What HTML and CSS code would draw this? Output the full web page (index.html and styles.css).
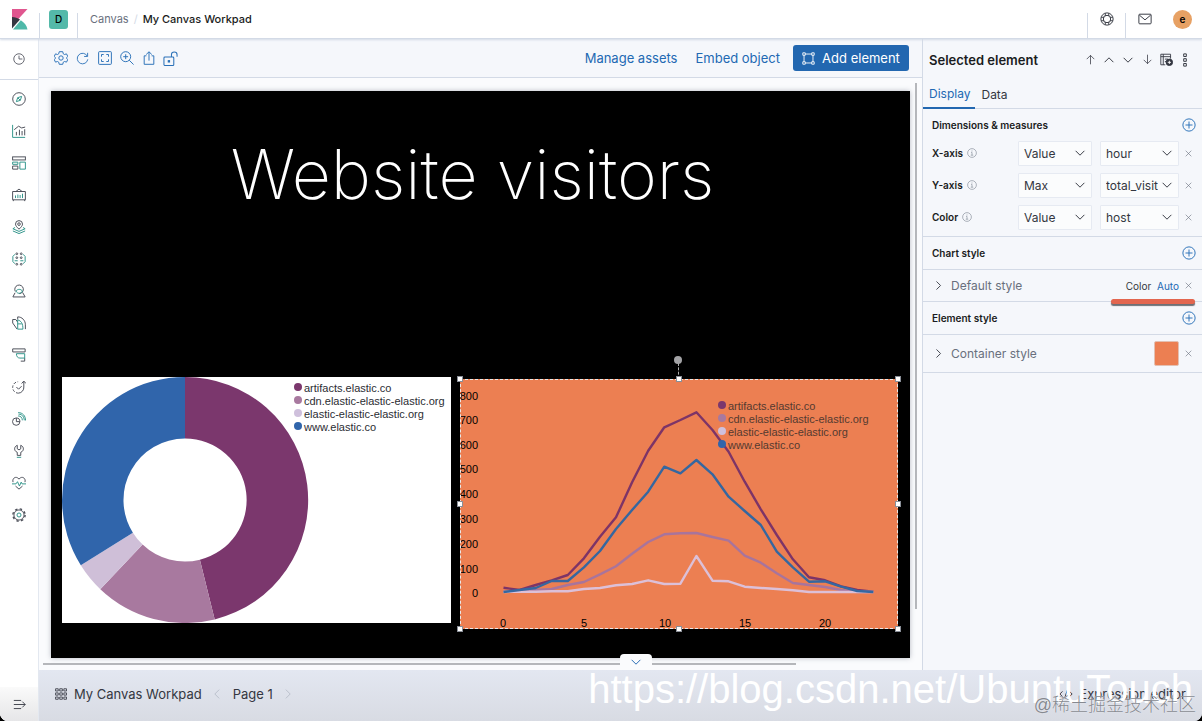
FILE: index.html
```html
<!DOCTYPE html>
<html lang="en">
<head>
<meta charset="utf-8">
<title>My Canvas Workpad - Canvas</title>
<link rel="stylesheet" href="styles.css">
</head>
<body>
<svg class="sprite" aria-hidden="true">
  <symbol id="down" viewBox="0 0 16 16"><path d="M3 5.500l5 5 5-5"/></symbol>
  <symbol id="up" viewBox="0 0 16 16"><path d="M3 10.500l5-5 5 5"/></symbol>
  <symbol id="left" viewBox="0 0 16 16"><path d="M10.500 3l-5 5 5 5"/></symbol>
  <symbol id="right" viewBox="0 0 16 16"><path d="M5.500 3l5 5-5 5"/></symbol>
  <symbol id="cross" viewBox="0 0 16 16"><path d="M3 3l10 10M13 3L3 13"/></symbol>
  <symbol id="info" viewBox="0 0 16 16"><circle cx="8" cy="8" r="7"/><path d="M6.500 7H8v4.500M6 11.500h4M8 4v1.500"/></symbol>
  <symbol id="plus" viewBox="0 0 16 16"><circle cx="8" cy="8" r="7"/><path d="M8 4v8M4 8h8"/></symbol>
</svg>
<div class="app">
  <header class="header">
    <a class="logo" href="#" aria-label="Kibana home">
      <svg width="16" height="21" viewBox="0 0 16 21"><path fill="#e0568f" d="M0 0h15.500L0 17z"/><path fill="#343741" d="M0 8c3 0 5.500 1 8 2.600L0 19.500z"/><path fill="#4fb9a9" d="M8.800 11.200c3.700 2.300 6 5.600 6.700 9.300H1z"/></svg>
    </a>
    <div class="space"><button class="badge" type="button">D</button></div>
    <nav class="crumbs" aria-label="Breadcrumb"><a href="#">Canvas</a><span class="slash">/</span><strong>My Canvas Workpad</strong></nav>
    <div class="header-end">
      <button class="cell" type="button" aria-label="Help"><svg class="ic" width="14" height="14" viewBox="0 0 16 16"><circle cx="8" cy="8" r="7"/><circle cx="8" cy="8" r="4.200"/><path d="M6 1.500v3M10 1.500v3M6 11.500v3M10 11.500v3M1.500 6h3M1.500 10h3M11.500 6h3M11.500 10h3"/></svg></button>
      <button class="cell" type="button" aria-label="Newsfeed"><svg class="ic" width="14" height="14" viewBox="0 0 16 16"><rect x="1" y="2.500" width="14" height="11" rx="1"/><path d="M1.500 3.500L8 9l6.500-5.500"/></svg></button>
      <button class="avatar" type="button">e</button>
    </div>
  </header>

  <nav class="side" aria-label="Main">
    <a class="recent" href="#" aria-label="Recently viewed"><svg class="ic" width="12" height="12" viewBox="0 0 16 16"><circle cx="8" cy="8" r="7"/><path d="M8 3.500V8h4.500"/></svg></a>
    <div class="links">
      <a href="#" aria-label="Discover"><svg class="ic" width="14" height="14" viewBox="0 0 16 16"><circle cx="8" cy="8" r="7.200"/><path class="t" d="M11 5L9.500 9.500 5 11l1.500-4.500zM6.500 6.500l3 3"/></svg></a>
      <a href="#" aria-label="Visualize"><svg class="ic" width="14" height="14" viewBox="0 0 16 16"><path class="t" d="M.7 1v14.300H15"/><path d="M5 13V9M8.500 13V6.500M11.500 13V8M14.500 13V6M2.500 6.500L7.500 2.500l3.500 2 4-1"/></svg></a>
      <a href="#" aria-label="Dashboard"><svg class="ic" width="14" height="14" viewBox="0 0 16 16"><rect x=".7" y="1" width="14.600" height="3.500"/><path d="M.7 11.500h6V15h-6z"/><path class="t" d="M.7 7h6v2.500h-6zM9 7h6.300v8H9z"/></svg></a>
      <a href="#" aria-label="Canvas"><svg class="ic" width="14" height="14" viewBox="0 0 16 16"><path d="M.7 4h14.600v9.500H.7zM4.500 4L8 1.200 11.500 4M1.500 15v-1.500M14.500 15v-1.500"/><path class="t" d="M4 11.500v-3M6.700 11.500V7.500M9.300 11.500V8M12 11.500V6.500"/></svg></a>
      <a href="#" aria-label="Maps"><svg class="ic" width="14" height="14" viewBox="0 0 16 16"><path d="M8 10.500C5.500 8 4 6.500 4 4.700a4 4 0 018 0C12 6.500 10.500 8 8 10.500z"/><circle cx="8" cy="4.700" r="1.500"/><path class="t" d="M3.500 8.500L1 10l7 3 7-3-2.500-1.500M1 12.500l7 3 7-3"/></svg></a>
      <a href="#" aria-label="Machine Learning"><svg class="ic" width="14" height="14" viewBox="0 0 16 16"><path class="t" d="M3.500 2.500L1 5v6l2.500 2.500M12.500 2.500L15 5v6l-2.500 2.500"/><circle cx="5.500" cy="2" r="1"/><circle cx="10.500" cy="2" r="1"/><circle cx="5.500" cy="14" r="1"/><circle cx="10.500" cy="14" r="1"/><circle cx="5.500" cy="6.500" r="1"/><circle cx="10.500" cy="6.500" r="1"/><path class="t" d="M3 10h3.500M9.500 10H13"/></svg></a>
      <a href="#" aria-label="Graph"><svg class="ic" width="14" height="14" viewBox="0 0 16 16"><path d="M3.800 8.500A4.900 4.900 0 118.300 11M12 9.500l3 5.300H1L3.500 10"/><path class="t" d="M4.500 8c2-2.500 5.500-2.500 7.500 0-1.500 3.500-6 3.500-7.500 0z"/></svg></a>
      <a href="#" aria-label="Metrics"><svg class="ic" width="14" height="14" viewBox="0 0 16 16"><path d="M6.500 4V1c5 0 8.800 4 8.800 9v5M.8 4h3.500l2.200 3M.8 4v4l5 7"/><path class="t" d="M6.500 4.500c4 1 6 4 6 10.500h-6zM6.500 9H11"/></svg></a>
      <a href="#" aria-label="Logs"><svg class="ic" width="14" height="14" viewBox="0 0 16 16"><path d="M15 4.500H.8V1H15zM10 15h4.500v-3.500"/><path class="t" d="M5 6.500h9.500v5H9C6.500 11.500 5 9.500 5 6.500z"/></svg></a>
      <a href="#" aria-label="Uptime"><svg class="ic" width="14" height="14" viewBox="0 0 16 16"><path d="M13.500 2v6a6.500 6.500 0 01-6 7M11 4l2.500-2.800L16 4M5 8l2.500 2.500L11 7"/><path d="M7.500 15A6.500 6.500 0 017 2" stroke-dasharray="3 1.800"/></svg></a>
      <a href="#" aria-label="APM"><svg class="ic" width="14" height="14" viewBox="0 0 16 16"><path d="M9 11a4.200 4.200 0 11-4.200-4.200C8 6.800 9 8.500 9 11zM5 7v4h4"/><path class="t" d="M7 4.500c3 0 4.800 2 4.800 5M7.500 2.500c4 0 6.500 3 6.500 7M7 .7c5.500 0 8.500 4 8.500 9"/></svg></a>
      <a href="#" aria-label="Dev Tools"><svg class="ic" width="14" height="14" viewBox="0 0 16 16"><path d="M6 1.500v4l2 1.200 2-1.200v-4c4 1.500 4 6.500 0 8V13H6V9.500c-4-1.500-4-6.500 0-8z"/><path class="t" d="M5.500 15.200h5"/></svg></a>
      <a href="#" aria-label="Stack Monitoring"><svg class="ic" width="14" height="14" viewBox="0 0 16 16"><path d="M1.200 7C0 3 3.500.5 6.200 2L8 3.500 9.800 2C12.500.5 16 3 14.800 7M4 11.500L8 15l4-3.500"/><path class="t" d="M0 9h4.500l1.800-2.500 2.200 5L10.500 7l1 2H16"/></svg></a>
      <a href="#" aria-label="Management"><svg class="ic" width="14" height="14" viewBox="0 0 16 16"><circle cx="8" cy="8" r="5.800"/><circle cx="8" cy="8" r="7" stroke-width="1.600" stroke-dasharray="2.750"/><circle class="t" cx="8" cy="8" r="2.300"/></svg></a>
    </div>
    <button class="collapse" type="button" aria-label="Expand navigation"><svg class="ic" width="13" height="13" viewBox="0 0 16 16"><path d="M1 3h9M1 8h14M1 13h9M11.500 4.500L15 8l-3.500 3.500"/></svg></button>
  </nav>

  <main class="main">
    <div class="toolbar">
      <div class="tools">
        <button type="button" aria-label="Settings"><svg class="ic" width="14" height="14" viewBox="0 0 16 16"><path d="M6 .8h4l.6 2.400 1.300.8L14.300 3.300l1.500 3L14 8l1.800 1.700-1.500 3-2.400-.7-1.300.8-.6 2.400H6l-.6-2.400-1.300-.8-2.400.7-1.500-3L2 8 .2 6.300l1.500-3L4.100 4l1.300-.8z"/><circle cx="8" cy="8" r="2.500"/></svg></button>
        <button type="button" aria-label="Refresh"><svg class="ic" width="13" height="13" viewBox="0 0 16 16"><path d="M13.800 5A6.500 6.500 0 1014.500 9M14.300 1v4.500H10"/></svg></button>
        <button type="button" aria-label="Full screen"><svg class="ic" width="14" height="14" viewBox="0 0 16 16"><rect x=".7" y=".7" width="14.600" height="14.600" rx="1"/><path d="M4 6.500V4h2.500M9.500 4H12v2.500M12 9.500V12H9.500M6.500 12H4V9.500"/></svg></button>
        <button type="button" aria-label="Zoom"><svg class="ic" width="14" height="14" viewBox="0 0 16 16"><circle cx="6.500" cy="6.500" r="5.700"/><path d="M10.500 10.500l5 5M6.500 3.700v5.600M3.700 6.500h5.600"/></svg></button>
        <button type="button" aria-label="Share"><svg class="ic" width="14" height="14" viewBox="0 0 16 16"><path d="M5 5.500H2.500v9.700h11V5.500H11M8 11V1M4.800 4L8 .9 11.200 4"/></svg></button>
        <button type="button" aria-label="Toggle editing"><svg class="ic" width="15" height="15" viewBox="0 0 16 16"><rect x="1" y="6.500" width="10.500" height="9" rx="1"/><path d="M9 6.500V4a3 3 0 016 0v2"/><path d="M6.300 9.700v2.600" stroke-width="2.500"/></svg></button>
      </div>
      <div class="actions">
        <a href="#">Manage assets</a>
        <a href="#">Embed object</a>
        <button class="add" type="button"><svg class="ic" width="13" height="13" viewBox="0 0 16 16"><path d="M2.500 4v8M13.500 4v8M4 2.500h8M4 13.500h8"/><path d="M1 1h3v3H1zM12 1h3v3h-3zM1 12h3v3H1zM12 12h3v3h-3z"/></svg>Add element</button>
      </div>
    </div>
    <div class="stage">
      <div class="workpad">
        <h1 class="title">Website visitors</h1>
        <div class="donut">
          <svg width="389" height="246" viewBox="0 0 389 246" role="img" aria-label="Visitors by host">
            <path fill="#7b376d" d="M123 0A123 123 0 01152.700 242.400L137.900 182.700A61.500 61.500 0 00123 61.500z"/>
            <path fill="#a8799f" d="M152.700 242.400A123 123 0 0138.300 212.200L80.600 167.600A61.500 61.500 0 00137.900 182.700z"/>
            <path fill="#cfbfd8" d="M38.300 212.200A123 123 0 0118.800 188.300L70.900 155.700A61.500 61.500 0 0080.600 167.600z"/>
            <path fill="#3065ab" d="M18.800 188.300A123 123 0 01123 0V61.500A61.500 61.500 0 0070.900 155.700z"/>
          </svg>
          <ul class="legend">
            <li class="c1">artifacts.elastic.co</li>
            <li class="c2">cdn.elastic-elastic-elastic.org</li>
            <li class="c3">elastic-elastic-elastic.org</li>
            <li class="c4">www.elastic.co</li>
          </ul>
        </div>
        <div class="lines">
          <svg width="438" height="250" viewBox="0 0 438 250" role="img" aria-label="Visitors by hour">
            <g class="ylab" text-anchor="end">
              <text x="18" y="21">800</text><text x="18" y="45">700</text><text x="18" y="70">600</text><text x="18" y="94">500</text><text x="18" y="119">400</text><text x="18" y="144">300</text><text x="18" y="169">200</text><text x="18" y="194">100</text><text x="18" y="218">0</text>
            </g>
            <g class="ylab" text-anchor="middle">
              <text x="43" y="248">0</text><text x="124" y="248">5</text><text x="205" y="248">10</text><text x="285" y="248">15</text><text x="365" y="248">20</text>
            </g>
            <g class="series">
              <polyline stroke="#7d3467" points="43.500,208.700 59.600,211 75.700,206 91.700,201.300 107.800,196 123.900,179.300 140,157.700 156,138.300 172.100,103.300 188.200,71.700 204.300,48.300 220.400,41 236.400,33.300 252.500,51 268.600,72.700 284.700,102.700 300.800,130.300 316.800,156 332.900,180.300 349,198.300 365.100,201.300 381.200,207.300 397.200,211 413.300,212.700"/>
              <polyline stroke="#a8749c" points="43.500,212.700 59.600,212 75.700,211 91.700,210 107.800,206 123.900,203 140,195.300 156,187.300 172.100,174.700 188.200,163 204.300,155.300 220.400,154.300 236.400,154 252.500,158 268.600,161.700 284.700,176.700 300.800,183.700 316.800,194.300 332.900,204 349,206 365.100,208 381.200,211 397.200,213 413.300,213"/>
              <polyline stroke="#dcc0d8" points="43.500,213 59.600,212.700 75.700,212.700 91.700,212.300 107.800,212.300 123.900,210 140,209 156,206.300 172.100,205 188.200,201.300 204.300,205 220.400,204.700 236.400,177 252.500,201.700 268.600,202.300 284.700,207.700 300.800,209 316.800,210 332.900,211.300 349,213 365.100,213 381.200,213 397.200,213 413.300,213"/>
              <polyline stroke="#3567a0" points="43.500,213 59.600,211 75.700,209 91.700,202 107.800,202 123.900,188.300 140,172 156,150 172.100,131 188.200,112.700 204.300,87.700 220.400,94.300 236.400,81 252.500,95.300 268.600,117.700 284.700,132 300.800,146 316.800,172.700 332.900,188.300 349,202.700 365.100,202.300 381.200,207.700 397.200,212 413.300,213"/>
            </g>
          </svg>
          <ul class="legend">
            <li class="c1">artifacts.elastic.co</li>
            <li class="c2">cdn.elastic-elastic-elastic.org</li>
            <li class="c3">elastic-elastic-elastic.org</li>
            <li class="c4">www.elastic.co</li>
          </ul>
          <span class="rotate"></span>
          <i class="h nw"></i><i class="h n"></i><i class="h ne"></i><i class="h w"></i><i class="h e"></i><i class="h sw"></i><i class="h s"></i><i class="h se"></i>
        </div>
      </div>
      <div class="vscroll"></div>
      <div class="hscroll"></div>
      <button class="tray" type="button" aria-label="Toggle tray"><svg class="ic" width="14" height="14"><use href="#down"/></svg></button>
    </div>
  </main>

  <aside class="panel">
    <div class="panel-head">
      <h2>Selected element</h2>
      <div class="order">
        <button type="button" aria-label="Bring to front"><svg class="ic" width="11" height="11" viewBox="0 0 16 16"><path d="M8 15V2M2.500 7.500L8 2l5.500 5.500"/></svg></button>
        <button type="button" aria-label="Bring forward"><svg class="ic" width="14" height="14"><use href="#up"/></svg></button>
        <button type="button" aria-label="Send backward"><svg class="ic" width="14" height="14"><use href="#down"/></svg></button>
        <button type="button" aria-label="Send to back"><svg class="ic" width="11" height="11" viewBox="0 0 16 16"><path d="M8 1v13M2.500 8.500L8 14l5.500-5.500"/></svg></button>
        <button type="button" aria-label="Save as new element"><svg class="ic" width="13" height="13" viewBox="0 0 16 16"><path d="M6.500 14.500H1v-13h12V7M1 4.500h12M4 1.500v13M6 7.500h4M6 10.500h1.500"/><circle cx="11.500" cy="11.500" r="4" fill="#343741"/><path stroke="#fff" d="M11.500 9.500v4M9.500 11.500h4"/></svg></button>
        <button type="button" aria-label="More actions"><svg class="ic" width="14" height="14" viewBox="0 0 16 16"><path d="M6.500 1h3v3h-3zM6.500 6.500h3v3h-3zM6.500 12h3v3h-3z"/></svg></button>
      </div>
    </div>
    <div class="tabs" role="tablist">
      <button class="on" type="button" role="tab" aria-selected="true">Display</button>
      <button type="button" role="tab" aria-selected="false">Data</button>
    </div>
    <section class="dims">
      <div class="sec-head"><h3>Dimensions &amp; measures</h3><button class="plus" type="button" aria-label="Add dimension"><svg class="ic" width="14" height="14"><use href="#plus"/></svg></button></div>
      <div class="row">
        <label for="x1">X-axis <svg class="ic info" width="10" height="10"><use href="#info"/></svg></label>
        <span class="pick how"><select id="x1"><option>Value</option></select><svg class="ic" width="14" height="14"><use href="#down"/></svg></span>
        <span class="pick"><select aria-label="X-axis field"><option>hour</option></select><svg class="ic" width="14" height="14"><use href="#down"/></svg></span>
        <button class="del" type="button" aria-label="Remove X-axis"><svg class="ic" width="9" height="9"><use href="#cross"/></svg></button>
      </div>
      <div class="row">
        <label for="y1">Y-axis <svg class="ic info" width="10" height="10"><use href="#info"/></svg></label>
        <span class="pick how"><select id="y1"><option>Max</option></select><svg class="ic" width="14" height="14"><use href="#down"/></svg></span>
        <span class="pick"><select aria-label="Y-axis field"><option>total_visitors</option></select><svg class="ic" width="14" height="14"><use href="#down"/></svg></span>
        <button class="del" type="button" aria-label="Remove Y-axis"><svg class="ic" width="9" height="9"><use href="#cross"/></svg></button>
      </div>
      <div class="row">
        <label for="c1">Color <svg class="ic info" width="10" height="10"><use href="#info"/></svg></label>
        <span class="pick how"><select id="c1"><option>Value</option></select><svg class="ic" width="14" height="14"><use href="#down"/></svg></span>
        <span class="pick"><select aria-label="Color field"><option>host</option></select><svg class="ic" width="14" height="14"><use href="#down"/></svg></span>
        <button class="del" type="button" aria-label="Remove Color"><svg class="ic" width="9" height="9"><use href="#cross"/></svg></button>
      </div>
    </section>
    <div class="sec-head ruled"><h3>Chart style</h3><button class="plus" type="button" aria-label="Add chart style"><svg class="ic" width="14" height="14"><use href="#plus"/></svg></button></div>
    <div class="style-row marked">
      <button class="expand" type="button"><svg class="ic" width="13" height="13"><use href="#right"/></svg>Default style</button>
      <span class="color">Color <a href="#">Auto</a></span>
      <button class="del" type="button" aria-label="Remove default style"><svg class="ic" width="9" height="9"><use href="#cross"/></svg></button>
    </div>
    <div class="sec-head ruled"><h3>Element style</h3><button class="plus" type="button" aria-label="Add element style"><svg class="ic" width="14" height="14"><use href="#plus"/></svg></button></div>
    <div class="style-row tall">
      <button class="expand" type="button"><svg class="ic" width="13" height="13"><use href="#right"/></svg>Container style</button>
      <button class="swatch" type="button" aria-label="Background color"></button>
      <button class="del" type="button" aria-label="Remove container style"><svg class="ic" width="9" height="9"><use href="#cross"/></svg></button>
    </div>
  </aside>

  <footer class="foot">
    <button type="button"><svg class="ic" width="12" height="12" viewBox="0 0 16 16"><path d="M.8 1h3.500v3H.8zM6.300 1h3.500v3H6.300zM11.800 1h3.500v3h-3.500zM.8 6.500h3.500v3H.8zM6.300 6.500h3.500v3H6.300zM11.800 6.500h3.500v3h-3.500zM.8 12h3.500v3H.8zM6.300 12h3.500v3H6.300zM11.800 12h3.500v3h-3.500z"/></svg>My Canvas Workpad</button>
    <button class="page-nav" type="button" aria-label="Previous page" disabled><svg class="ic" width="14" height="14"><use href="#left"/></svg></button>
    <button type="button">Page 1</button>
    <button class="page-nav" type="button" aria-label="Next page" disabled><svg class="ic" width="14" height="14"><use href="#right"/></svg></button>
    <button class="editor" type="button"><svg class="ic" width="14" height="14" viewBox="0 0 16 16"><path d="M4 5L1 8l3 3M12 5l3 3-3 3M9.500 3.500l-3 9"/></svg>Expression editor</button>
  </footer>
  <div class="mark-url">https://blog.csdn.net/UbuntuTouch</div>
  <div class="mark-cn" lang="zh">@稀土掘金技术社区</div>
</div>
</body>
</html>
```
FILE: styles.css
```css
* { box-sizing: border-box; }
html { background: #000; }
body { margin: 0; font-family: "Inter", sans-serif; font-size: 12px; color: #343741; }
button { margin: 0; padding: 0; border: 0; background: none; font: inherit; color: inherit; display: flex; align-items: center; justify-content: center; }
a { color: #2269b3; text-decoration: none; }
h1, h2, h3, ul { margin: 0; padding: 0; }
.sprite { display: none; }
.ic { flex: none; display: block; fill: none; stroke: currentColor; stroke-width: 1.1; }
.ic .t { stroke: #2f9489; }

.app { position: relative; display: grid; grid-template-columns: 39px 1fr 280px; grid-template-rows: 39px 1fr 51px; height: 100vh; overflow: hidden; background: #fafbfd; border-radius: 0 0 8px 8px; }

.header { grid-column: 1 / -1; display: flex; align-items: stretch; background: #fff; border-bottom: 1px solid #d3dae6; box-shadow: 0 1px 2px #d3dae6; z-index: 1; }
.logo { width: 39px; display: flex; align-items: center; padding-left: 12px; }
.space { display: flex; align-items: center; width: 39px; padding-left: 9px; margin-right: 12px; border: solid #d3dae6; border-width: 0 1px; border-image: linear-gradient(transparent 13px, #d3dae6 13px) 1; }
.badge { width: 19px; height: 19px; border-radius: 3px; background: #54b9a9; font-size: 10px; font-weight: 500; color: #000; }
.crumbs { display: flex; align-items: center; gap: 5px; font-size: 11px; }
.crumbs a { color: #69707d; }
.crumbs .slash { color: #d3dae6; }
.crumbs strong { font-weight: 500; color: #1a1c21; }
.header-end { margin-left: auto; display: flex; }
.cell { width: 38px; border-left: 1px solid; border-image: linear-gradient(transparent 13px, #d3dae6 13px) 1; }
.avatar { width: 19px; height: 19px; border-radius: 50%; background: #e7a164; color: #000; font-size: 10px; font-weight: 600; align-self: center; margin: 0 10px; }

.side { grid-row: 2 / 4; display: flex; flex-direction: column; background: #fff; border-right: 1px solid #e3e8f0; }
.recent { height: 41px; display: flex; align-items: center; justify-content: center; border-bottom: 1px solid #d3dae6; color: #4a4d57; }
.links { padding-top: 3px; }
.links a { height: 32px; display: flex; align-items: center; justify-content: center; color: #4a4d57; }
.collapse { margin-top: auto; height: 34px; background: linear-gradient(#fafafa, #e6e6e8); }

.main { display: flex; flex-direction: column; min-width: 0; }
.toolbar { height: 39px; flex: none; display: flex; align-items: center; justify-content: space-between; padding: 0 13px 0 14px; background: #f5f7fb; border-bottom: 1px solid #d3dae6; }
.tools { display: flex; gap: 7px; color: #2b71b8; }
.tools button { width: 15px; height: 24px; }
.actions { display: flex; align-items: center; gap: 18px; font-size: 13px; }
.add { height: 26px; width: 116px; gap: 7px; margin-left: -5px; border-radius: 3px; background: #2267b0; color: #fff; }

.stage { position: relative; flex: 1; display: grid; grid-template-columns: 1fr 12px; grid-template-rows: 1fr 12px; padding: 13px 0 0 12px; }
.workpad { position: relative; background: #000; box-shadow: 0 0 5px rgba(60, 70, 90, .35); }
.vscroll { width: 2px; height: 526px; margin-left: 5px; margin-top: -8px; background: #b5b7bb; }
.hscroll { height: 2px; width: 753px; margin-left: -8px; margin-top: 5px; background: #b5b7bb; }
.tray { position: absolute; bottom: 0; left: 581px; width: 32px; height: 16px; border-radius: 4px 4px 0 0; background: #fafbfd; color: #2269b3; }

.title { position: absolute; left: 0; top: 38px; width: 843px; text-align: center; white-space: nowrap; color: #fff; font-family: "Inter", sans-serif; font-weight: 200; font-size: 68px; line-height: 90px; }
.donut { position: absolute; left: 11px; top: 286px; width: 389px; height: 246px; background: #fff; }
.donut svg, .lines > svg { display: block; }
.legend { position: absolute; top: 5px; left: 232px; list-style: none; font: 11px/13px "Liberation Sans", sans-serif; color: #2b2d33; white-space: nowrap; }
.legend li { display: flex; align-items: center; gap: 2px; }
.legend li::before { content: ""; width: 8px; height: 8px; border-radius: 50%; margin-bottom: 3px; background: currentColor; }
.legend .c1::before { color: #7b376d; }
.legend .c2::before { color: #a8799f; }
.legend .c3::before { color: #cfc0dc; }
.legend .c4::before { color: #3065ab; }
.lines { position: absolute; left: 409px; top: 288px; width: 438px; height: 250px; background: #ec7f52; outline: 1px dashed #e8e8e8; outline-offset: -1px; }
.lines .legend { top: 21px; left: 258px; color: #543a30; }
.ylab { font: 11px "Liberation Sans", sans-serif; fill: #000; }
.series { fill: none; stroke-width: 2.4; stroke-linejoin: round; }
.h { position: absolute; width: 6px; height: 6px; margin: -3px; background: #fff; outline: 1px solid #8a8f98; outline-offset: -1px; }
.nw { left: 0; top: 0; } .n { left: 50%; top: 0; } .ne { left: 100%; top: 0; }
.w { left: 0; top: 50%; } .e { left: 100%; top: 50%; }
.sw { left: 0; top: 100%; } .s { left: 50%; top: 100%; } .se { left: 100%; top: 100%; }
.rotate { position: absolute; left: 218px; top: -16px; height: 16px; border-left: 1px dashed #b0b0b0; }
.rotate::before { content: ""; position: absolute; left: -5px; top: -7px; width: 8px; height: 8px; border-radius: 50%; background: #a3a3a6; }

.panel { background: #f5f7fb; border-left: 1px solid #d3dae6; min-width: 0; }
.panel-head { display: flex; justify-content: space-between; align-items: center; height: 41px; padding: 0 10px 0 6px; }
.panel-head h2 { font-size: 13px; font-weight: 600; color: #1a1c21; }
.order { display: flex; gap: 5px; }
.order button { width: 14px; height: 20px; }
.tabs { display: flex; height: 29px; border-bottom: 1px solid #d3dae6; }
.tabs button { padding: 0 5px 0 6px; height: 29px; }
.tabs .on { color: #2269b3; border-bottom: 2px solid #2267b0; }
.sec-head { display: flex; align-items: center; justify-content: space-between; height: 31px; padding: 0 6px 0 9px; }
.sec-head h3 { font-size: 10px; font-weight: 600; color: #1a1c21; }
.plus { color: #2b71b8; }
.ruled { height: 33px; border-bottom: 1px solid #d3dae6; }
.dims { height: 128px; border-bottom: 1px solid #d3dae6; }
.row { display: flex; gap: 5px; align-items: center; height: 32px; padding: 0 9px 6px; }
.row label { flex: 1; display: flex; align-items: center; gap: 4px; font-size: 10px; font-weight: 600; color: #1a1c21; }
.info { color: #8a919e; }
.pick { position: relative; width: 79px; }
.how { width: 74px; margin-right: 3px; }
.pick select { display: block; width: 100%; height: 25px; appearance: none; border: 1px solid #e6eaf2; border-radius: 1px; background: #fbfcfd; padding: 0 20px 0 5px; font: 12px "Inter", sans-serif; color: #343741; }
.pick .ic { position: absolute; right: 5px; top: 5px; pointer-events: none; }
.del { width: 9px; height: 20px; color: #69707d; }
.style-row { position: relative; display: flex; align-items: center; gap: 5px; height: 32px; padding: 0 9px; border-bottom: 1px solid #d3dae6; }
.tall { height: 38px; }
.expand { margin-right: auto; gap: 6px; color: #69707d; }
.expand .ic { color: #343741; }
.color { font-size: 10px; }
.color a { margin-left: 3px; }
.swatch { width: 25px; height: 25px; border-radius: 2px; background: #ec7f52; border: 1px solid #e3c0b2; }
.marked::after { content: ""; position: absolute; right: 7px; bottom: -3px; width: 84px; height: 5px; border-radius: 3px; background: #e3664f; box-shadow: 0 2px 1px #6d6f75; z-index: 1; }

.foot { grid-column: 2 / 4; display: flex; align-items: center; padding: 0 16px 3px; background: linear-gradient(#e3e7f1, #d8dbe3); font-size: 13px; }
.foot button { gap: 7px; }
.foot .page-nav { width: 31px; color: #b9bfcb; }
.foot .editor { margin-left: auto; gap: 6px; }
.mark-url { position: absolute; right: 9px; bottom: 9px; font: 40px/46px "Liberation Sans", sans-serif; color: #fff; white-space: nowrap; z-index: 2; pointer-events: none; }
.mark-cn { position: absolute; right: 6px; bottom: 3px; font: 300 18px/26px "Liberation Sans", "Noto Sans CJK SC", sans-serif; color: #868990; text-shadow: 0 0 1px #fff; white-space: nowrap; z-index: 3; pointer-events: none; }
```
